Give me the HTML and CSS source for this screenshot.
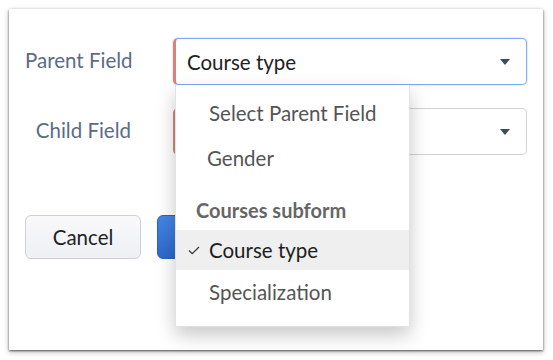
FILE: index.html
```html
<!DOCTYPE html>
<html lang="en">
<head>
  <meta charset="UTF-8">
  <title>Field dependency</title>
  <link rel="stylesheet" href="styles.css">
</head>
<body>

<div class="dialog">
  <div class="form">
    <div class="row">
      <label class="label">Parent Field</label>
      <div class="field">
        <div class="select focused">
          <span class="value">Course type</span>
          <span class="caret"></span>
        </div>

        <ul class="menu">
          <li class="option">Select Parent Field</li>
          <li class="option gender">Gender</li>
          <li class="group">Courses subform</li>
          <li class="option selected">
            <svg class="check" width="12" height="9" viewBox="0 0 12 9">
              <path d="M1 4.5 L4.2 7.6 L11 1" fill="none" stroke="#333" stroke-width="1.2"/>
            </svg>
            Course type
          </li>
          <li class="option">Specialization</li>
        </ul>
      </div>
    </div>

    <div class="row">
      <label class="label">Child Field</label>
      <div class="field">
        <div class="select">
          <span class="value"></span>
          <span class="caret"></span>
        </div>
      </div>
    </div>
  </div>

  <div class="actions">
    <button class="btn btn-cancel">Cancel</button>
    <button class="btn btn-primary">Done</button>
  </div>
</div>

</body>
</html>
```

FILE: styles.css
```css
body {
  margin: 0;
  padding: 9px;
  background-color: #fff;
  font-family: Lato, "Open Sans", sans-serif;
}

.dialog {
  width: 534px;
  height: 341px;
  box-sizing: border-box;
  padding: 29px 16px 0 16px;
  background-color: #fff;
  box-shadow: 0 1px 2px rgba(0, 0, 0, 0.6), 0 2px 6px rgba(0, 0, 0, 0.25);
}

.form {
  display: flex;
  flex-direction: column;
  gap: 23px;
}

.row {
  display: grid;
  grid-template-columns: 106px 354px;
  column-gap: 42px;
  align-items: center;
}

.label {
  text-align: right;
  font-size: 20.5px;
  color: #5c6b86;
  margin-top: -4px;
  white-space: nowrap;
}

.field {
  position: relative;
}

.select {
  height: 47px;
  box-sizing: border-box;
  display: flex;
  align-items: center;
  justify-content: space-between;
  padding: 0 16px 0 11px;
  border: 1px solid #cfd2d8;
  border-left: 3px solid #d9837b;
  border-radius: 5px;
  background-color: #fff;
}

.select.focused {
  border-color: #7eaaf0;
  border-left-color: #d9837b;
  box-shadow: 0 0 2px rgba(90, 150, 240, 0.5);
}

.value {
  font-size: 20.5px;
  color: #222;
}

.caret {
  width: 0;
  height: 0;
  border-left: 5px solid transparent;
  border-right: 5px solid transparent;
  border-top: 6px solid #3e4b5d;
}

/* dropdown list */
.menu {
  position: absolute;
  left: 2px;
  top: 47px;
  width: 233px;
  margin: 0;
  padding: 5px 0 12px 0;
  list-style: none;
  background-color: #fff;
  border: 1px solid #e2e2e2;
  border-top: none;
  box-shadow: 0 8px 18px rgba(0, 0, 0, 0.22);
  z-index: 10;
}

.option {
  height: 45px;
  display: flex;
  align-items: center;
  padding-left: 33px;
  font-size: 20.5px;
  color: #555;
}

.option.gender {
  padding-left: 31px;
}

.group {
  height: 40px;
  margin-top: 10px;
  display: flex;
  align-items: center;
  padding-left: 20px;
  font-size: 20px;
  font-weight: bold;
  color: #666;
}

.option.selected {
  height: 40px;
  padding-left: 12px;
  background-color: #efefef;
  color: #1d1d1d;
}

.check {
  margin-right: 9px;
}

.option:last-child {
  height: 44px;
}

/* buttons */
.actions {
  display: flex;
  gap: 16px;
  margin-top: 60px;
}

.btn {
  width: 116px;
  height: 44px;
  border-radius: 6px;
  font-family: Lato, "Open Sans", sans-serif;
  font-size: 20.5px;
}

.btn-cancel {
  background: linear-gradient(#f9f9fb, #eef0f4);
  border: 1px solid #cdd0da;
  color: #222;
}

.btn-primary {
  background: linear-gradient(#4585e6, #2c68cb);
  border: 1px solid #2a63c2;
  color: #fff;
}
```
